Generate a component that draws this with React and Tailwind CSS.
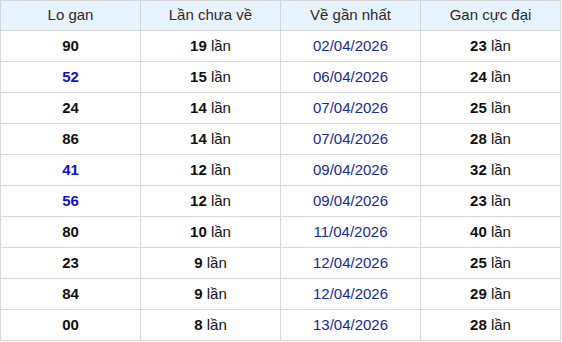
const rows = [
  ["90", false, 19, "02/04/2026", 23],
  ["52", true, 15, "06/04/2026", 24],
  ["24", false, 14, "07/04/2026", 25],
  ["86", false, 14, "07/04/2026", 28],
  ["41", true, 12, "09/04/2026", 32],
  ["56", true, 12, "09/04/2026", 23],
  ["80", false, 10, "11/04/2026", 40],
  ["23", false, 9, "12/04/2026", 25],
  ["84", false, 9, "12/04/2026", 29],
  ["00", false, 8, "13/04/2026", 28],
];

const cell = "border border-[#d6d6d6] h-[31px] p-0 text-center align-middle";
const head = "border border-[#d6d6d6] h-[30px] p-0 text-center align-middle font-normal";

export default function App() {
  return (
    <div className="bg-white" style={{ fontFamily: '"Liberation Sans", Arial, sans-serif' }}>
      <table className="w-[561px] table-fixed border-collapse text-[15px] text-[#111]">
        <thead>
          <tr className="bg-[#e8f4fd] text-[#2a2a2a]">
            <th className={head}>Lo gan</th>
            <th className={head}>Lần chưa về</th>
            <th className={head}>Về gần nhất</th>
            <th className={head}>Gan cực đại</th>
          </tr>
        </thead>
        <tbody>
          {rows.map(([num, blue, miss, date, max]) => (
            <tr key={num}>
              <td className={`${cell} font-bold ${blue ? "text-[#1111cc]" : "text-[#111]"}`}>{num}</td>
              <td className={cell}>
                <b>{miss}</b> lần
              </td>
              <td className={`${cell} text-[#1a2a8f]`}>{date}</td>
              <td className={cell}>
                <b>{max}</b> lần
              </td>
            </tr>
          ))}
        </tbody>
      </table>
    </div>
  );
}
